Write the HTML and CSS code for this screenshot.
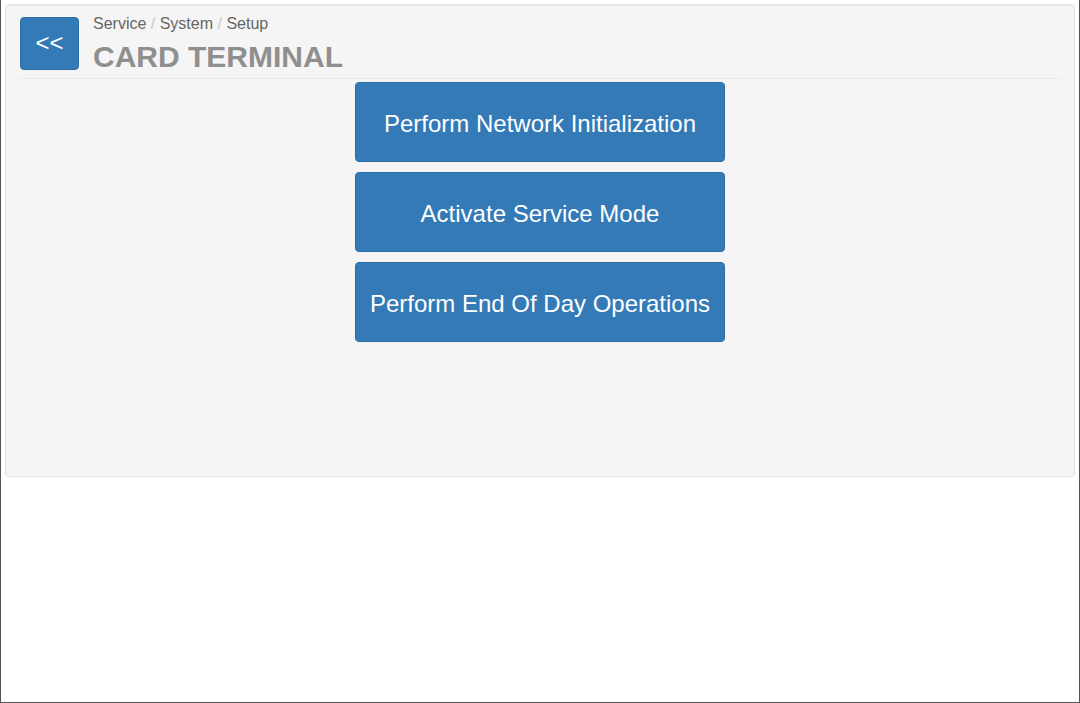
FILE: index.html
```html
<!DOCTYPE html>
<html lang="en">
<head>
<meta charset="utf-8">
<title>Card Terminal</title>
<link rel="stylesheet" href="styles.css">
</head>
<body>
<div class="page">
  <div class="well">
    <div class="header">
      <button class="back">&lt;&lt;</button>
      <div class="titles">
        <div class="crumbs">Service <span class="sep">/</span> System <span class="sep">/</span> Setup</div>
        <h1 class="title">CARD TERMINAL</h1>
      </div>
    </div>
    <div class="actions">
      <button class="action">Perform Network Initialization</button>
      <button class="action">Activate Service Mode</button>
      <button class="action">Perform End Of Day Operations</button>
    </div>
  </div>
</div>
</body>
</html>
```
FILE: styles.css
```css
html, body {
  margin: 0;
  padding: 0;
}
body {
  width: 1080px;
  height: 703px;
  box-sizing: border-box;
  border-left: 1px solid #555;
  border-right: 1px solid #555;
  border-bottom: 1px solid #555;
  background: #fff;
  font-family: "Liberation Sans", Arial, sans-serif;
  overflow: hidden;
}
.page {
  padding: 4px 4px 0 4px;
}
.well {
  height: 473px;
  box-sizing: border-box;
  background: #f5f5f5;
  border: 1px solid #e3e3e3;
  border-radius: 4px;
  box-shadow: inset 0 1px 1px rgba(0,0,0,0.05);
  padding: 12px 14px 0 14px;
}
.header {
  display: flex;
  align-items: flex-start;
  gap: 14px;
  padding-bottom: 4px;
  border-bottom: 1px solid #e9e9e9;
}
.back {
  width: 59px;
  height: 53px;
  margin: 0;
  padding: 0 0 2px 0;
  background: #337ab7;
  border: 1px solid #2e6da4;
  border-radius: 4px;
  color: #fff;
  font-family: "Liberation Sans", Arial, sans-serif;
  font-size: 24px;
  cursor: pointer;
}
.titles {
  margin-top: -2px;
}
.crumbs {
  font-size: 16px;
  line-height: 18px;
  color: #666;
}
.sep {
  color: #c8c8c8;
}
.title {
  margin: 7px 0 0 0;
  font-size: 30px;
  line-height: 34px;
  font-weight: bold;
  color: #8f8f8f;
}
.actions {
  display: flex;
  flex-direction: column;
  align-items: center;
  gap: 10px;
  margin-top: 3px;
}
.action {
  width: 370px;
  height: 80px;
  margin: 0;
  padding: 4px 0 0 0;
  background: #337ab7;
  border: 1px solid #2e6da4;
  border-radius: 4px;
  color: #fff;
  font-family: "Liberation Sans", Arial, sans-serif;
  font-size: 24px;
  cursor: pointer;
}
```
